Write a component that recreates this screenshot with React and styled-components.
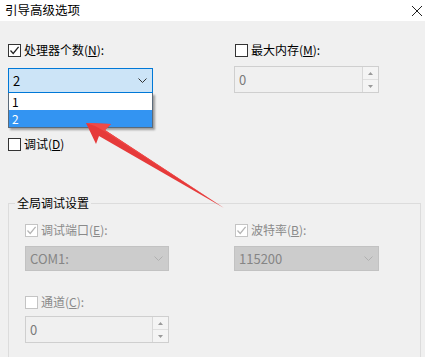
import React from 'react';
import styled, { createGlobalStyle } from 'styled-components';

const GlobalStyle = createGlobalStyle`
  body {
    margin: 0;
    font-family: "Noto Sans CJK SC", "Noto Sans", sans-serif;
    font-size: 12px;
  }
`;

const Window = styled.div`
  position: relative;
  width: 425px;
  height: 357px;
  overflow: hidden;
  background: #f0f0f0;
  color: #000;
`;

const TitleBar = styled.div`
  height: 21px;
  background: #fff;
  display: flex;
  align-items: center;
  justify-content: space-between;
  padding: 0 2px 0 5px;
  font-size: 12.5px;
  line-height: 1;
`;

const Content = styled.div`
  padding-left: 8px;
`;

const Columns = styled.div`
  display: grid;
  grid-template-columns: ${p => p.left}px ${p => p.right}px;
  padding-left: ${p => p.indent || 0}px;
`;

const Col = styled.div`
  display: flex;
  flex-direction: column;
  align-items: flex-start;
`;

const CheckRow = styled.label`
  display: flex;
  align-items: center;
  gap: 3px;
  height: 14px;
  margin-top: ${p => p.top || 0}px;
  margin-left: ${p => p.shift || 0}px;
  color: ${p => (p.disabled ? '#8a8a8a' : '#000')};
  line-height: 14px;
  white-space: nowrap;
`;

const Box = styled.span`
  width: 11px;
  height: 11px;
  border: 1px solid ${p => (p.disabled ? '#c4c4c4' : '#333')};
  background: #fff;
  display: flex;
  align-items: center;
  justify-content: center;
  flex-shrink: 0;
`;

const ComboWrap = styled.div`
  position: relative;
  margin-top: ${p => p.top}px;
`;

const Combo = styled.div`
  box-sizing: border-box;
  width: ${p => p.w}px;
  height: 25px;
  display: flex;
  align-items: center;
  justify-content: space-between;
  padding: 0 5px 0 4px;
  background: ${p => (p.disabled ? '#cccccc' : '#cce4f7')};
  border: 1px solid ${p => (p.disabled ? '#c2c2c2' : '#0078d7')};
  color: ${p => (p.disabled ? '#858585' : '#000')};
  font-size: 13px;
`;

const List = styled.div`
  position: absolute;
  top: 25px;
  left: 0;
  width: 145px;
  box-sizing: border-box;
  border: 1px solid #5a6a7a;
  border-top: none;
  background: #fff;
  box-shadow: 2px 2px 2px rgba(0, 0, 0, 0.35);
`;

const Item = styled.div`
  height: 17px;
  line-height: 17px;
  padding-left: 3px;
  font-size: 12px;
  overflow: hidden;
  background: ${p => (p.selected ? '#3394f2' : '#fff')};
  color: ${p => (p.selected ? '#fff' : '#000')};
`;

const Spinner = styled.div`
  box-sizing: border-box;
  width: ${p => p.w}px;
  height: 27px;
  margin-top: ${p => p.top}px;
  display: flex;
  background: #f0f0f0;
  border: 1px solid #cfcfcf;
  color: #7a7a7a;
  font-size: 13px;
`;

const SpinText = styled.div`
  flex: 1;
  display: flex;
  align-items: center;
  padding-left: 4px;
`;

const SpinButtons = styled.div`
  width: 15px;
  display: flex;
  flex-direction: column;
  border-left: 1px solid #d8d8d8;
`;

const SpinBtn = styled.div`
  flex: 1;
  display: flex;
  align-items: center;
  justify-content: center;
  background: #f4f4f4;
  & + & {
    border-top: 1px solid #e0e0e0;
  }
`;

const Group = styled.fieldset`
  box-sizing: border-box;
  width: 413px;
  margin: 46px 0 0 0;
  padding: 0 0 40px 0;
  border: 1px solid #dcdcdc;
  border-bottom: none;
  min-width: 0;
`;

const Legend = styled.legend`
  margin-left: 6px;
  padding: 0 2px;
  font-size: 12px;
  line-height: 12px;
`;

const GroupBody = styled.div`
  padding-top: 14px;
`;

const Overlay = styled.svg`
  position: absolute;
  left: 0;
  top: 0;
  pointer-events: none;
`;

const Check = ({ color }) => (
  <svg width="11" height="11" viewBox="0 0 11 11">
    <path d="M1.5 5.5 L4.2 8.4 L9.6 1.8" fill="none" stroke={color} strokeWidth="1.3" />
  </svg>
);

const CheckBox = ({ checked, disabled, children, top, shift }) => (
  <CheckRow disabled={disabled} top={top} shift={shift}>
    <Box disabled={disabled}>{checked && <Check color={disabled ? '#b5b5b5' : '#222'} />}</Box>
    <span>{children}</span>
  </CheckRow>
);

const Chevron = ({ color }) => (
  <svg width="9" height="5" viewBox="0 0 9 5">
    <path d="M0.5 0.5 L4.5 4.5 L8.5 0.5" fill="none" stroke={color} strokeWidth="1" />
  </svg>
);

const Tri = ({ up }) => (
  <svg width="5" height="3" viewBox="0 0 5 3">
    <path d={up ? 'M0 3 L2.5 0 L5 3 Z' : 'M0 0 L2.5 3 L5 0 Z'} fill="#9a9a9a" />
  </svg>
);

const Spin = ({ w, top, value }) => (
  <Spinner w={w} top={top}>
    <SpinText>{value}</SpinText>
    <SpinButtons>
      <SpinBtn><Tri up /></SpinBtn>
      <SpinBtn><Tri /></SpinBtn>
    </SpinButtons>
  </Spinner>
);

export default function App() {
  return (
    <Window>
      <GlobalStyle />
      <TitleBar>
        <span>引导高级选项</span>
        <svg width="12" height="12" viewBox="0 0 12 12">
          <path d="M1 1 L11 11 M11 1 L1 11" stroke="#222" strokeWidth="1" />
        </svg>
      </TitleBar>
      <Content>
        <Columns left={226} right={145}>
          <Col>
            <CheckBox checked top={22}>处理器个数(<u>N</u>):</CheckBox>
            <ComboWrap top={11}>
              <Combo w={145}>
                <span>2</span>
                <Chevron color="#333" />
              </Combo>
              <List>
                <Item>1</Item>
                <Item selected>2</Item>
              </List>
            </ComboWrap>
            <CheckBox top={44}>调试(<u>D</u>)</CheckBox>
          </Col>
          <Col>
            <CheckBox top={22} shift={1}>最大内存(<u>M</u>):</CheckBox>
            <Spin w={145} top={9} value="0" />
          </Col>
        </Columns>
        <Group>
          <Legend>全局调试设置</Legend>
          <GroupBody>
            <Columns left={209} right={145} indent={16}>
              <Col>
                <CheckBox checked disabled>调试端口(<u>E</u>):</CheckBox>
                <ComboWrap top={9}>
                  <Combo w={144} disabled>
                    <span>COM1:</span>
                    <Chevron color="#b0b0b0" />
                  </Combo>
                </ComboWrap>
                <CheckBox disabled top={24}>通道(<u>C</u>):</CheckBox>
                <Spin w={144} top={7} value="0" />
              </Col>
              <Col>
                <CheckBox checked disabled shift={1}>波特率(<u>B</u>):</CheckBox>
                <ComboWrap top={9}>
                  <Combo w={145} disabled>
                    <span>115200</span>
                    <Chevron color="#b0b0b0" />
                  </Combo>
                </ComboWrap>
              </Col>
            </Columns>
          </GroupBody>
        </Group>
      </Content>
      <Overlay width="425" height="357" viewBox="0 0 425 357">
        <polygon
          points="86,123 111,124 105,130 224,208 99,136 96,144"
          fill="#e63a3a"
        />
        <polygon points="86,123 111,124 105,130 224,208 104,131 95,126" fill="#ef4a48" />
      </Overlay>
    </Window>
  );
}
